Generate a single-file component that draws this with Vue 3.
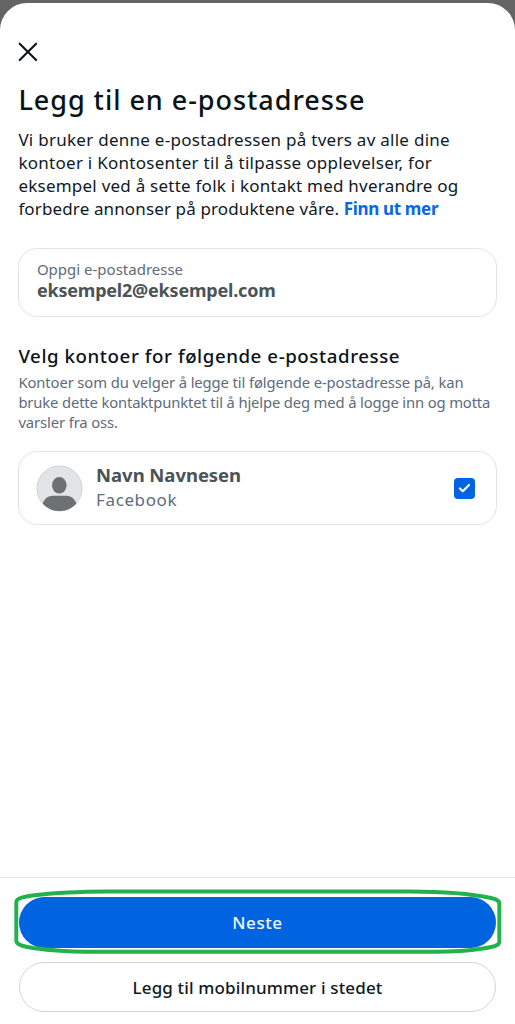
<script setup>
import { ref } from 'vue'

const selected = ref(true)
</script>

<template>
  <div class="screen">
    <main class="sheet">
      <button class="close" aria-label="Lukk">
        <svg width="20" height="20" viewBox="0 0 20 20">
          <path d="M1.700 1.700 18.100 18.100M18.100 1.700 1.700 18.100" />
        </svg>
      </button>

      <h1>Legg til en e-postadresse</h1>
      <p class="intro">
        <span>Vi bruker denne e-postadressen på tvers av alle dine</span>
        <span>kontoer i Kontosenter til å tilpasse opplevelser, for</span>
        <span class="snug">eksempel ved å sette folk i kontakt med hverandre og</span>
        <span class="last">forbedre annonser på produktene våre. <a>Finn ut mer</a></span>
      </p>

      <div class="card field">
        <span class="label">Oppgi e-postadresse</span>
        <span class="value">eksempel2@eksempel.com</span>
      </div>

      <h2>Velg kontoer for følgende e-postadresse</h2>
      <p class="hint">
        <span>Kontoer som du velger å legge til følgende e-postadresse på, kan</span>
        <span class="tight">bruke dette kontaktpunktet til å hjelpe deg med å logge inn og motta</span>
        <span>varsler fra oss.</span>
      </p>

      <div class="card account" @click="selected = !selected">
        <svg class="avatar" width="47" height="47" viewBox="0 0 47 47">
          <clipPath id="face"><circle cx="23.5" cy="23.5" r="22.6" /></clipPath>
          <circle cx="23.5" cy="23.5" r="22.5" fill="#e3e4e7" stroke="#cfd1d4" />
          <g clip-path="url(#face)" fill="#6c7174">
            <ellipse cx="23.3" cy="20.3" rx="7.3" ry="8.3" />
            <path d="M5 44C6.500 35 11 30.700 17 30.700h13c6 0 10.500 4.300 12 13.300v3H5Z" />
          </g>
        </svg>
        <div class="who">
          <strong>Navn Navnesen</strong>
          <span>Facebook</span>
        </div>
        <span class="check">
          <svg v-if="selected" width="21" height="21" viewBox="0 0 21 21">
            <path d="M5.900 10.500 8.800 13.200 15 7" />
          </svg>
        </span>
      </div>

      <footer>
        <div class="highlighted">
          <button class="btn primary">Neste</button>
          <svg class="ring" width="490" height="66" viewBox="0 0 490 66">
            <path d="M4.300 14C4.300 9.500 16 8 25 7C46 4.500 67 3.700 95 3.500H398C437 3.500 465 7 479 10C485 11.500 487.300 12.500 487.300 15V54C487.300 58 480 59 471 60.500C454 63 441 63.700 424 63.700H74C53 63.700 36 62 21 60C10 58 4.300 56.500 4.300 53Z" />
          </svg>
        </div>
        <button class="btn secondary">Legg til mobilnummer i stedet</button>
      </footer>
    </main>
  </div>
</template>

<style>
body {
  margin: 0;
  background: #646464;
}
</style>

<style scoped>
.screen {
  box-sizing: border-box;
  height: 1024px;
  padding-top: 3px;
  background: #646464;
  font-family: 'Noto Sans', 'Open Sans', sans-serif;
  color: #0f191f;
  overflow: hidden;
}
.sheet {
  box-sizing: border-box;
  height: 1021px;
  padding: 38.500px 18.400px 0;
  background: #fff;
  border-radius: 27px 27px 0 0;
  display: flex;
  flex-direction: column;
}
button {
  font-family: inherit;
  padding: 0;
  border: 0;
  background: none;
}
.close {
  display: block;
  width: 20px;
  height: 20px;
  margin-left: -0.900px;
}
.close svg {
  display: block;
}
.close path {
  fill: none;
  stroke: #0b1419;
  stroke-width: 2.100;
  stroke-linecap: round;
}
h1 {
  margin: 21.500px 0 0;
  font-size: 27px;
  line-height: 34px;
  font-weight: 500;
  letter-spacing: 0.960px;
  white-space: nowrap;
  color: #0a1317;
}
p {
  margin: 0;
}
p > span {
  display: block;
  white-space: nowrap;
}
.intro {
  margin-top: 11px;
  font-size: 17px;
  line-height: 23px;
  letter-spacing: 0.270px;
}
.intro .snug {
  letter-spacing: 0.235px;
}
.intro .last {
  letter-spacing: 0.130px;
}
.intro a {
  color: #0866e8;
  font-weight: 700;
  letter-spacing: -0.330px;
}
.card {
  box-sizing: border-box;
  border: 1.300px solid #e0e4ea;
  border-radius: 19px;
  display: flex;
}
.field {
  height: 69px;
  margin-top: 28px;
  padding: 10px 17.500px 0;
  flex-direction: column;
}
.label {
  font-size: 15px;
  line-height: 20px;
  color: #5d6c7b;
}
.value {
  font-size: 18px;
  line-height: 23px;
  font-weight: 700;
  color: #4c5355;
  letter-spacing: -0.200px;
}
h2 {
  margin: 27px 0 0;
  font-size: 18.700px;
  line-height: 24px;
  font-weight: 500;
  letter-spacing: 0.570px;
  white-space: nowrap;
  color: #0a1317;
}
.hint {
  margin-top: 4px;
  font-size: 14.800px;
  line-height: 20px;
  letter-spacing: -0.110px;
  color: #5d6c7b;
}
.hint .tight {
  letter-spacing: -0.145px;
}
.account {
  height: 74px;
  margin-top: 19px;
  padding: 0 20.500px 0 17px;
  align-items: center;
}
.avatar {
  flex: none;
  margin-left: -0.300px;
}
.who {
  display: flex;
  flex-direction: column;
  margin: 0 0 2px 13px;
  flex: 1;
}
.who strong {
  font-size: 18.500px;
  line-height: 25px;
  color: #4c5355;
  letter-spacing: -0.050px;
}
.who span {
  font-size: 17px;
  line-height: 25px;
  letter-spacing: 0.600px;
  color: #5d6c7b;
}
.check {
  width: 21px;
  height: 21px;
  border-radius: 4px;
  background: #0064e0;
}
.check svg {
  display: block;
}
.check path {
  fill: none;
  stroke: #fff;
  stroke-width: 2.200;
  stroke-linecap: round;
  stroke-linejoin: round;
}
footer {
  margin: auto -18.400px 0;
  height: 147px;
  box-sizing: border-box;
  border-top: 1px solid #e6e8eb;
  padding: 19px 19px 0;
}
.highlighted {
  position: relative;
}
.ring {
  position: absolute;
  left: -7px;
  top: -9px;
  pointer-events: none;
}
.ring path {
  fill: none;
  stroke: #22b14c;
  stroke-width: 3.900;
  stroke-linejoin: round;
}
.btn {
  box-sizing: border-box;
  display: block;
  width: 100%;
  height: 50.500px;
  border-radius: 26px;
  font-size: 17px;
  font-weight: 500;
}
.primary {
  background: #0064e0;
  color: #f2f7ff;
  letter-spacing: 0.600px;
}
.secondary {
  margin-top: 14px;
  border: 1.300px solid #ced5dc;
  padding-top: 1px;
  color: #0f191f;
  letter-spacing: 0.140px;
}
</style>
